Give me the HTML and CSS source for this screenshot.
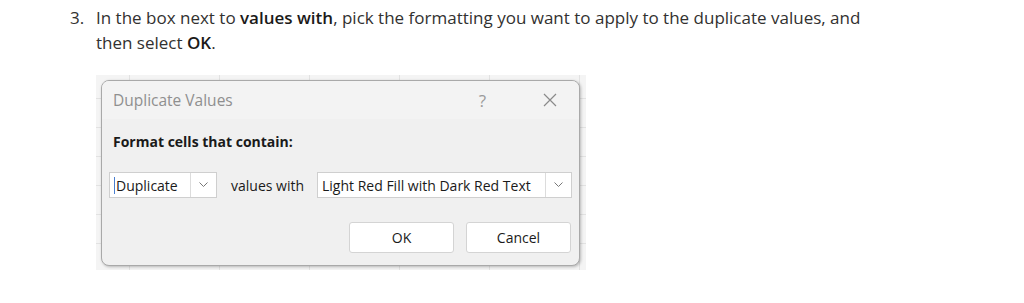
FILE: index.html
```html
<!DOCTYPE html>
<html lang="en">
<head>
    <meta charset="UTF-8">
    <title>Duplicate Values step</title>
    <link rel="stylesheet" href="styles.css">
</head>
<body>
    <div class="step">
        <div class="step-num">3.</div>
        <div class="step-body">
            <p class="step-text">In the box next to <b>values with</b>, pick the formatting you want to apply to the duplicate values, and then select <b>OK</b>.</p>

            <div class="shot">
                <div class="dialog">
                    <div class="titlebar">
                        <span class="title">Duplicate Values</span>
                        <span class="help">?</span>
                        <svg class="close" width="14" height="14" viewBox="0 0 14 14">
                            <path d="M1 1 L13 13 M13 1 L1 13" stroke="#8a8a8a" stroke-width="1.2" fill="none"/>
                        </svg>
                    </div>
                    <div class="dialog-body">
                        <div class="label">Format cells that contain:</div>
                        <div class="row">
                            <div class="combo combo-small">
                                <span class="combo-text"><span class="caret"></span>Duplicate</span>
                                <span class="combo-btn">
                                    <svg width="9" height="6" viewBox="0 0 9 6"><path d="M0.5 0.5 L4.5 4.5 L8.5 0.5" stroke="#777" stroke-width="1" fill="none"/></svg>
                                </span>
                            </div>
                            <span class="row-label">values with</span>
                            <div class="combo combo-wide">
                                <span class="combo-text">Light Red Fill with Dark Red Text</span>
                                <span class="combo-btn">
                                    <svg width="9" height="6" viewBox="0 0 9 6"><path d="M0.5 0.5 L4.5 4.5 L8.5 0.5" stroke="#777" stroke-width="1" fill="none"/></svg>
                                </span>
                            </div>
                        </div>
                        <div class="buttons">
                            <button class="btn">OK</button>
                            <button class="btn">Cancel</button>
                        </div>
                    </div>
                </div>
            </div>
        </div>
    </div>
</body>
</html>
```

FILE: styles.css
```css
body {
    margin: 0;
    background: white;
    font-family: "Open Sans", "Noto Sans", sans-serif;
    color: #323130;
}
.step {
    display: flex;
    padding: 5px 0 0 70px;
}
.step-num {
    width: 26px;
    font-size: 17px;
    line-height: 25px;
}
.step-body {
    width: 790px;
}
.step-text {
    margin: 0;
    font-size: 17px;
    line-height: 25px;
}
.step-text b {
    font-weight: 600;
    color: #1b1a19;
}
.shot {
    margin-top: 20px;
    width: 490px;
    height: 195px;
    box-sizing: border-box;
    padding: 5px 6px 4px 5px;
    background-color: #f4f4f4;
    background-image:
        repeating-linear-gradient(90deg, transparent 0 33px, #e2e2e2 33px 34px, transparent 34px 90px),
        repeating-linear-gradient(0deg, transparent 0 26px, #e2e2e2 26px 27px, transparent 27px 29px);
}
.dialog {
    height: 100%;
    box-sizing: border-box;
    border: 1px solid #a9a9a9;
    border-radius: 8px;
    background: #f0f0f0;
    box-shadow: 1px 1px 3px rgba(0,0,0,0.25);
    overflow: hidden;
}
.titlebar {
    display: flex;
    align-items: center;
    height: 38px;
    padding: 0 22px 0 11px;
    background: #f3f3f3;
}
.title {
    flex: 1;
    font-size: 15.5px;
    color: #8f8f8f;
}
.help {
    font-size: 17px;
    color: #9a9a9a;
    margin-right: 57px;
}
.dialog-body {
    padding: 0 8px 0 7px;
}
.label {
    font-size: 14px;
    font-weight: 700;
    color: #1a1a1a;
    margin-top: 13px;
    padding-left: 4px;
}
.row {
    display: flex;
    align-items: center;
    margin-top: 21px;
}
.combo {
    display: flex;
    flex-shrink: 0;
    height: 26px;
    box-sizing: border-box;
    border: 1px solid #cfcfcf;
    background: white;
}
.combo-small {
    width: 108px;
}
.combo-wide {
    width: 255px;
}
.combo-text {
    flex: 1;
    display: flex;
    align-items: center;
    font-size: 14px;
    color: #1a1a1a;
    padding-left: 4px;
    white-space: nowrap;
}
.caret {
    width: 1px;
    height: 17px;
    background: #4a7fd0;
    margin-right: 1px;
}
.combo-btn {
    width: 25px;
    display: flex;
    align-items: center;
    justify-content: center;
    border-left: 1px solid #dcdcdc;
}
.row-label {
    font-size: 14px;
    color: #1a1a1a;
    margin: 0 13px 0 14px;
    white-space: nowrap;
}
.buttons {
    display: flex;
    justify-content: flex-end;
    gap: 12px;
    margin-top: 24px;
}
.btn {
    width: 105px;
    height: 31px;
    border: 1px solid #d4d4d4;
    border-radius: 3px;
    background: white;
    font-family: "Open Sans", "Noto Sans", sans-serif;
    font-size: 14px;
    color: #1a1a1a;
}
```
